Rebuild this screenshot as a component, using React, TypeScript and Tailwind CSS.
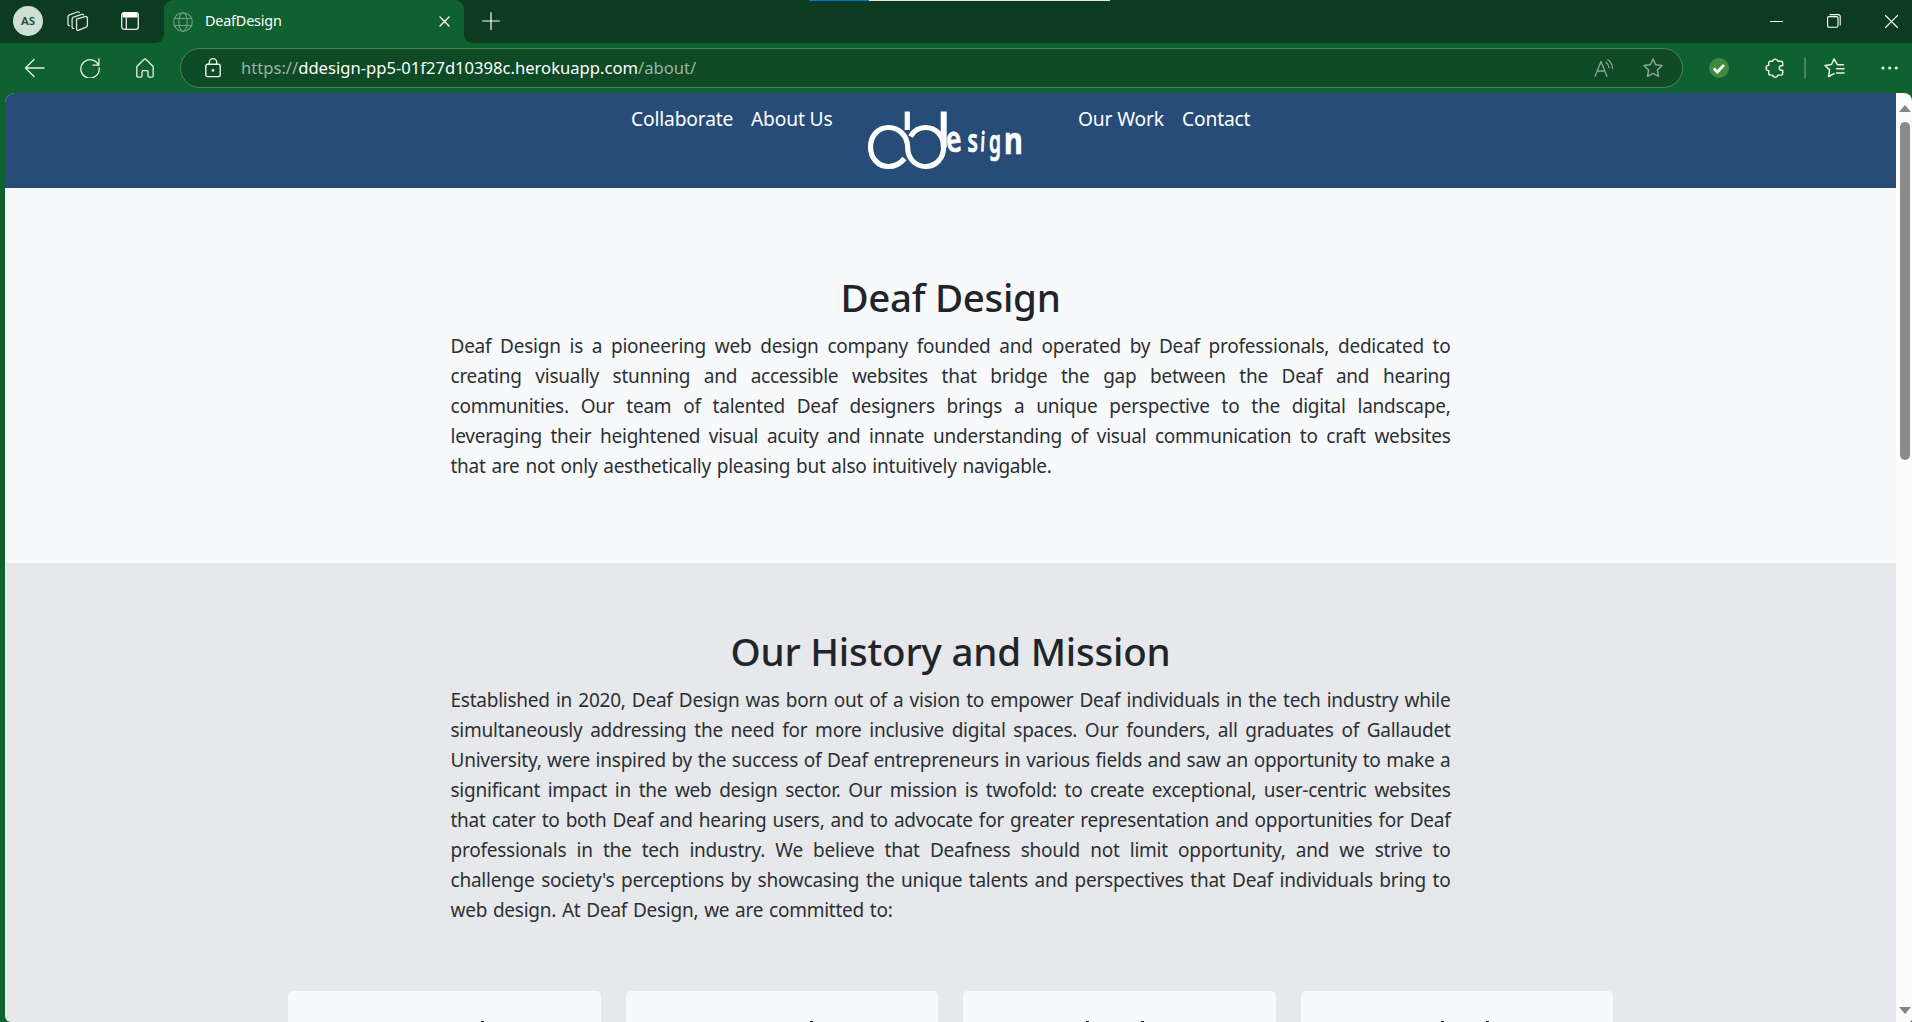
import React from "react";

const intro = [
  "Deaf Design is a pioneering web design company founded and operated by Deaf professionals, dedicated to",
  "creating visually stunning and accessible websites that bridge the gap between the Deaf and hearing",
  "communities. Our team of talented Deaf designers brings a unique perspective to the digital landscape,",
  "leveraging their heightened visual acuity and innate understanding of visual communication to craft websites",
  "that are not only aesthetically pleasing but also intuitively navigable.",
];
const history = [
  "Established in 2020, Deaf Design was born out of a vision to empower Deaf individuals in the tech industry while",
  "simultaneously addressing the need for more inclusive digital spaces. Our founders, all graduates of Gallaudet",
  "University, were inspired by the success of Deaf entrepreneurs in various fields and saw an opportunity to make a",
  "significant impact in the web design sector. Our mission is twofold: to create exceptional, user-centric websites",
  "that cater to both Deaf and hearing users, and to advocate for greater representation and opportunities for Deaf",
  "professionals in the tech industry. We believe that Deafness should not limit opportunity, and we strive to",
  "challenge society's perceptions by showcasing the unique talents and perspectives that Deaf individuals bring to",
  "web design. At Deaf Design, we are committed to:",
];

function Lines({ lines }: { lines: string[] }) {
  return (
    <p className="mx-auto w-[1000px] text-[19px] leading-[30px] tracking-[-0.24px] text-[#2b3035]">
      {lines.map((l, i) => (
        <span
          key={i}
          className={
            i === lines.length - 1
              ? "block whitespace-nowrap [word-spacing:1.1px]"
              : "block whitespace-nowrap text-justify [text-align-last:justify]"
          }
        >
          {l}
        </span>
      ))}
    </p>
  );
}

const marks = [
  { pad: "pl-[193px]", gap: "gap-0", n: 1 },
  { pad: "pl-[184px]", gap: "gap-0", n: 1 },
  { pad: "pl-[123px]", gap: "gap-[52px]", n: 2 },
  { pad: "pl-[140px]", gap: "gap-[42px]", n: 2 },
];

const svg = {
  fill: "none",
  stroke: "currentColor",
  strokeLinecap: "round" as const,
  strokeLinejoin: "round" as const,
};

function TabStrip() {
  return (
    <div className="flex h-[43px] w-full shrink-0 bg-[#0c3b1f]">
      <div className="flex w-[164px] items-center pb-px pl-[13px]">
        <div className="flex h-[30px] w-[30px] items-center justify-center rounded-full bg-[#cfe0d4] text-[11.5px] font-semibold text-[#1d4a30]">
          AS
        </div>
        <svg {...svg} className="ml-[24px] h-[22px] w-[22px] text-[#dbe7df]" viewBox="0 0 22 22" strokeWidth="1.3">
          <path d="M9.5 9.200 18 6.600q2.400-.6 2.400 1.700v7q0 1.300-1.300 1.800l-7.300 3q-2.200.8-2.200-1.500Z" />
          <path d="M6.600 18.400q-1.500.2-1.500-1.600V9.200q0-1.500 1.400-2L14.800 4.400q1.300-.3 1.900.5" />
          <path d="M2.500 15.600Q1 15.600 1 14V6.800q0-1.500 1.400-2L10.300 2q1.300-.4 1.900.4" />
        </svg>
        <svg className="ml-[32px] h-[18px] w-[18px] shrink-0 text-[#e6eee9]" viewBox="0 0 18 18" fill="none" stroke="currentColor" strokeWidth="1.3">
          <rect x=".7" y=".7" width="16.600" height="16.600" rx="2.600" />
          <path d="M1.500.5h15v5h-15z" fill="#fff" stroke="none" />
          <path d="M5.300 5v12" />
        </svg>
      </div>
      <div className="relative flex w-[300px] items-center rounded-t-[9px] bg-[#106130] pl-[9px] text-white">
        <svg className="absolute bottom-0 -left-[10px] h-[10px] w-[10px] text-[#106130]" viewBox="0 0 10 10" fill="currentColor">
          <path d="M10 0v10H0Q10 10 10 0Z" />
        </svg>
        <svg className="absolute -right-[10px] bottom-0 h-[10px] w-[10px] text-[#106130]" viewBox="0 0 10 10" fill="currentColor">
          <path d="M0 0v10h10Q0 10 0 0Z" />
        </svg>
        <svg {...svg} className="h-5 w-5 text-[#6fa283]" viewBox="0 0 20 20" strokeWidth="1.1">
          <circle cx="10" cy="10" r="9.300" />
          <ellipse cx="10" cy="10" rx="4.200" ry="9.300" />
          <path d="M1.500 6.500h17M1.500 13.500h17" />
        </svg>
        <span className="ml-3 w-[234px] pb-px text-[14.4px] tracking-[-0.2px]">DeafDesign</span>
        <svg {...svg} className="h-[11px] w-[11px]" viewBox="0 0 11 11" strokeWidth="1.4">
          <path d="m1 1 9 9M10 1l-9 9" />
        </svg>
      </div>
      <div className="flex flex-1 items-center pb-px text-white">
        <svg {...svg} className="ml-[18px] h-[18px] w-[18px]" viewBox="0 0 18 18" strokeWidth="1.2">
          <path d="M9 .6v16.800M.6 9h16.800" />
        </svg>
        <div className="mb-auto ml-[309px] flex h-px w-[301px] bg-[#dfe9e2]">
          <div className="h-px w-[60px] bg-[#0078d4]" />
        </div>
        <svg {...svg} className="ml-auto h-[13px] w-[13px]" viewBox="0 0 13 13" strokeWidth="1">
          <path d="M0 6.500h13" />
        </svg>
        <svg {...svg} className="ml-[44px] h-[14px] w-[14px]" viewBox="0 0 14 14" strokeWidth="1.100">
          <rect x=".6" y="2.600" width="10.400" height="10.600" rx="1.500" />
          <path d="M3 .6h8.200q2 0 2 2v8.400" />
        </svg>
        <svg {...svg} className="mr-[14px] ml-[44px] h-[13px] w-[13px]" viewBox="0 0 13 13" strokeWidth="1.100">
          <path d="m.5.5 12 12M12.500.5l-12 12" />
        </svg>
      </div>
    </div>
  );
}

function Toolbar() {
  return (
    <div className="flex h-[50px] w-full shrink-0 items-center bg-[#106130] text-[#e9f1ec]">
      <svg {...svg} className="ml-[24px] h-[20px] w-[21px]" viewBox="0 0 21 20" strokeWidth="1.300">
        <path d="M20 10H1.500M10 1.500 1.500 10l8.500 8.500" />
      </svg>
      <svg {...svg} className="ml-[35px] h-[20px] w-[20px]" viewBox="0 0 20 20" strokeWidth="1.300">
        <path d="M18.600 7.500A9.200 9.200 0 1 0 19.200 10M18.900 1v6.200h-6" />
      </svg>
      <svg {...svg} className="ml-[36px] h-[20px] w-[18px]" viewBox="0 0 18 20" strokeWidth="1.300">
        <path d="M.8 8.500 8 1.500q1-1 2 0l7.200 7v9.200q0 1.500-1.500 1.500h-2.200q-1.500 0-1.500-1.500v-4q0-1-1-1H7q-1 0-1 1v4q0 1.500-1.500 1.500H2.300Q.8 19.200.8 17.700Z" />
      </svg>
      <div className="ml-[26px] flex h-[40px] w-[1503px] items-center rounded-full border border-[#4f8263] bg-[#0d4a25]">
        <svg {...svg} className="ml-[24px] h-[20px] w-[16px]" viewBox="0 0 16 20" strokeWidth="1.400">
          <rect x=".8" y="6.300" width="14.400" height="12.300" rx="1.800" />
          <path d="M4.300 6V4.300a3.700 3.700 0 0 1 7.400 0V6" />
          <circle cx="8" cy="12.400" r=".7" fill="currentColor" />
        </svg>
        <span className="ml-[20px] text-[16.6px] whitespace-nowrap text-[#9ab5a3]">
          https://<span className="text-white">ddesign-pp5-01f27d10398c.herokuapp.com</span>/about/
        </span>
        <svg {...svg} className="ml-auto h-[19px] w-[20px] text-[#8ba493]" viewBox="0 0 20 19" strokeWidth="1.300">
          <path d="M1 17.500 7 2.500l6 15M3.300 12h7.400M12 3.200q2.500 1.800 2.800 5.300M13.800.8q4.300 2.700 4.800 8.500" />
        </svg>
        <svg {...svg} className="mr-[19px] ml-[29px] h-[20px] w-[20px] text-[#8ba493]" viewBox="0 0 20 20" strokeWidth="1.500">
          <path d="m10 1 2.700 5.700 6.300.9-4.600 4.400 1.100 6.300-5.500-3-5.500 3 1.100-6.300L1 7.600l6.300-.9Z" />
        </svg>
      </div>
      <svg className="ml-[26px] h-[20px] w-[20px]" viewBox="0 0 20 20">
        <circle cx="10" cy="10" r="10" fill="#3f8a3c" />
        <path d="m4.800 10.500 3.500 3.500 6.700-7" fill="none" stroke="#fff" strokeWidth="2.800" />
      </svg>
      <svg {...svg} className="ml-[36px] h-[20px] w-[19px]" viewBox="0 0 19 20" strokeWidth="1.400">
        <path d="M5.200 3.200H7.700a2.600 2.600 0 0 1 5.100 0h3.400q1.500 0 1.500 1.500v3h-1.200a2.300 2.300 0 0 0 0 4.600h1.200v3.300q0 1.500-1.500 1.500h-3.400a2.600 2.600 0 0 1-5.100 0H5.200q-1.500 0-1.500-1.500v-3a2.600 2.600 0 0 1 0-5.200V4.700q0-1.500 1.500-1.500Z" />
      </svg>
      <div className="ml-[20px] h-[20px] w-[2px] bg-[#4a8560]" />
      <svg {...svg} className="ml-[18px] h-[20px] w-[21px]" viewBox="0 0 21 20" strokeWidth="1.500">
        <path d="M19.500 6.800h-6L10 1 7.500 6.500l-6.500 1 4.600 4.400-1 6.600L10 15.600M12.500 10.800h7.500M12.500 15h7.500" />
      </svg>
      <svg className="ml-[36px] h-[4px] w-[17px]" viewBox="0 0 17 4" fill="currentColor">
        <circle cx="2" cy="2" r="1.600" />
        <circle cx="8.700" cy="2" r="1.600" />
        <circle cx="15.300" cy="2" r="1.600" />
      </svg>
    </div>
  );
}

function Logo() {
  return (
    <svg className="h-[66px] w-[164px] shrink-0" viewBox="858 107 164 66" fill="none" stroke="#fff" strokeWidth="5.2">
      <path d="M904.500 158.500Q898 166.500 888.500 166.500C878 166.500 870.500 158 870.500 147S878 127.500 888.500 127.500C899 127.500 907.600 136 907.600 147S915 166.500 925.500 166.500S943.700 158 943.700 147S936 127.500 925.500 127.500Q915.500 127.500 910.500 136.500" />
      <path d="M907.300 111.500v18.500" />
      <path d="M943.700 111.500v36" strokeWidth="6" />
      <g fill="#fff" stroke="#fff" strokeWidth=".7" fontFamily="Noto Sans" fontWeight="600">
        <text transform="translate(947 152.500) rotate(-6) scale(.74 1)" fontSize="36">e</text>
        <text transform="translate(967.500 151.500) scale(.64 1)" fontSize="33">s</text>
        <text transform="translate(980 151) rotate(3) scale(.6 1)" fontSize="27">i</text>
        <text transform="translate(989 153) scale(.6 1)" fontSize="32">g</text>
        <text transform="translate(1004 154) scale(.76 1)" fontSize="38" fontWeight="700">n</text>
      </g>
    </svg>
  );
}

export default function App() {
  return (
    <div className="flex h-[1022px] w-[1912px] flex-col overflow-hidden bg-[#106130] font-['Noto_Sans',sans-serif]">
      <TabStrip />
      <Toolbar />
      <div className="flex h-[929px] w-full pl-[5px]">
        <main className="flex w-[1891px] flex-col overflow-hidden rounded-tl-[10px] rounded-bl-[6px] bg-[#e7e8eb]">
          <nav className="flex h-[95px] shrink-0 bg-[#274c77] pt-[14px] text-[19.2px] leading-6 tracking-[-0.15px] text-white">
            <span className="ml-[626px] w-[120px]">Collaborate</span>
            <span className="w-[107px]">About Us</span>
            <Logo />
            <span className="ml-[56px] w-[104px]">Our Work</span>
            <span>Contact</span>
          </nav>
          <section className="h-[375px] shrink-0 bg-[#f8f9fb] pt-[85px]">
            <h1 className="mb-[10px] text-center text-[38.5px] leading-12 font-[540] tracking-[-0.3px] text-[#212529]">Deaf Design</h1>
            <Lines lines={intro} />
          </section>
          <section className="shrink-0 pt-[64px]">
            <h1 className="mb-[10px] text-center text-[38.5px] leading-12 font-[540] tracking-[-0.2px] text-[#212529]">Our History and Mission</h1>
            <Lines lines={history} />
            <div className="mx-auto mt-[66px] grid w-[1325px] grid-cols-4 gap-[25px]">
              {marks.map((m, i) => (
                <div key={i} className={"flex h-[60px] rounded-t-[5px] bg-[#f8f9fb] pt-[30px] " + m.pad + " " + m.gap}>
                  {Array.from({ length: m.n }, (_, k) => (
                    <div key={k} className="h-2 w-[3px] bg-[#212529]" />
                  ))}
                </div>
              ))}
            </div>
          </section>
        </main>
        <aside className="flex w-[16px] flex-col items-center rounded-tr-[8px] rounded-br-[3px] bg-[#fcfcfc] pl-[2px]">
          <svg className="mt-3 h-[7px] w-[12px]" viewBox="0 0 12 7" fill="#858585">
            <path d="M6 0l6 7H0Z" />
          </svg>
          <div className="mt-[10px] h-[338px] w-[10px] rounded-full bg-[#8b8b8b]" />
          <svg className="mt-auto mb-2 h-[7px] w-[12px]" viewBox="0 0 12 7" fill="#858585">
            <path d="M6 7l6-7H0Z" />
          </svg>
        </aside>
      </div>
    </div>
  );
}
